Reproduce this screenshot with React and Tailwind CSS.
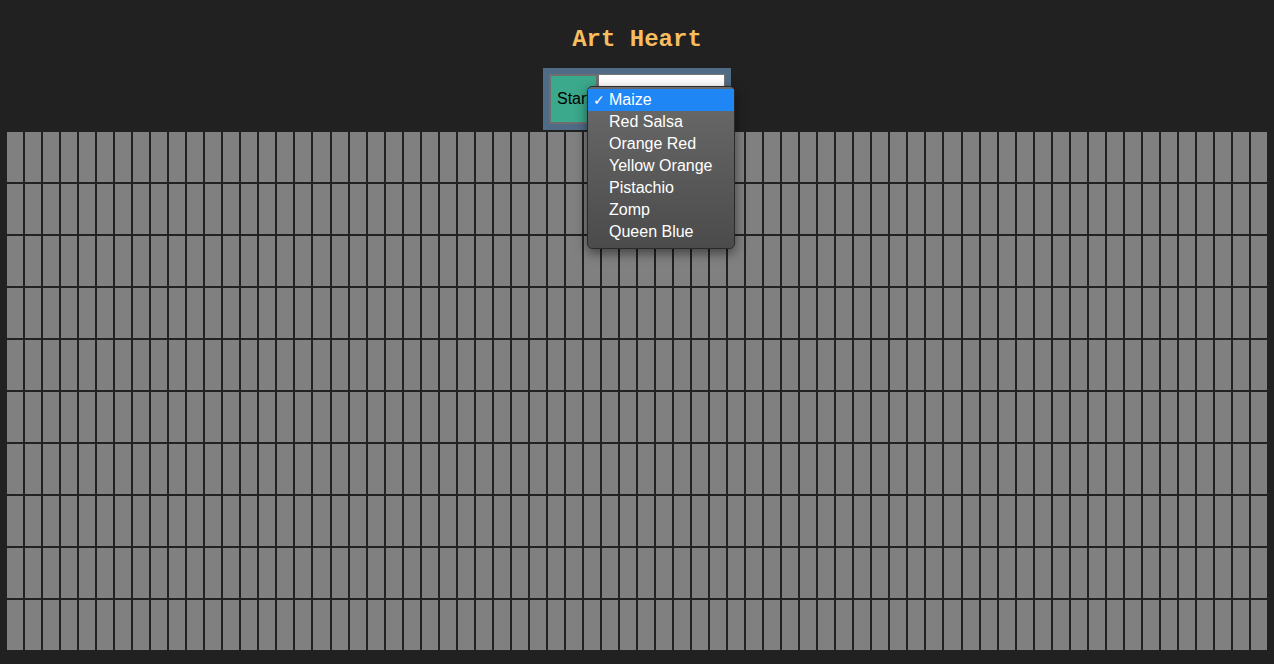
import React from "react";

const COLORS = ["Maize", "Red Salsa", "Orange Red", "Yellow Orange", "Pistachio", "Zomp", "Queen Blue"];
const COLS = 70;
const ROWS = 10;

function ColorMenu() {
  return (
    <div className="absolute left-[44px] top-[18px] z-10 w-[148px] rounded-[5px] border border-[#2a2a2a] bg-gradient-to-b from-[#6b6b6b] to-[#4b4b4b] pb-[5px] pt-[2px] shadow-[0_4px_12px_rgba(0,0,0,0.5)]">
      {COLORS.map((name, i) => (
        <div
          key={name}
          className={
            i === 0
              ? "relative flex h-[22px] items-center bg-[#1f87f5] pl-[21px] text-[16px] text-white"
              : "relative flex h-[22px] items-center pl-[21px] text-[16px] text-white"
          }
        >
          {i === 0 && <span className="absolute left-[5px] text-[14px]">✓</span>}
          {name}
        </div>
      ))}
    </div>
  );
}

export default function App() {
  const cells = Array.from({ length: COLS * ROWS });

  return (
    <div className="min-h-[664px] bg-[#212121] pt-[28px] font-['Liberation_Sans',Arial,sans-serif]">
      <h1 className="text-center font-['Liberation_Mono','Courier_New',monospace] text-[24px] font-bold leading-[24px] text-[#f7bd5f]">
        Art Heart
      </h1>

      <div className="mt-[16px] flex justify-center">
        <div className="relative flex items-start bg-[#4f6b86] p-[6px]">
          <button className="h-[50px] w-[49px] overflow-hidden border-2 border-[#6e6e6e] bg-[#3ba98c] pl-[6px] text-left text-[16px] text-black">
            Start
          </button>
          <div className="h-[20px] w-[127px] border border-[#767676] bg-white" />
          <ColorMenu />
        </div>
      </div>

      <div className="mx-[6px] mt-[1px] grid grid-cols-[repeat(70,1fr)]">
        {cells.map((_, i) => (
          <div key={i} className="h-[52px] border border-[#222222] bg-[#808080]" />
        ))}
      </div>
    </div>
  );
}
